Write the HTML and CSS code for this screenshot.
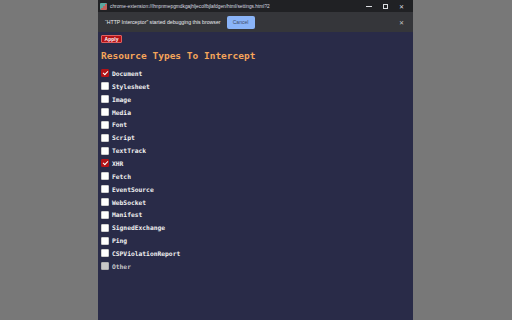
FILE: index.html
```html
<!DOCTYPE html>
<html>
<head>
<meta charset="utf-8">
<link rel="stylesheet" href="styles.css">
</head>
<body>
<div class="window">
  <div class="titlebar">
    <div class="favicon"></div>
    <div class="url">chrome-extension://lhnpnmepgmdkgajhljecolfbjlafdgen/html/settings.html?2</div>
    <div class="controls">
      <span class="min"></span>
      <span class="max"></span>
      <span class="close">✕</span>
    </div>
  </div>
  <div class="infobar">
    <span class="info-text">“HTTP Interceptor” started debugging this browser</span>
    <span class="cancel">Cancel</span>
    <span class="info-close">✕</span>
  </div>
  <div class="content">
    <button class="apply">Apply</button>
    <h1 class="heading">Resource Types To Intercept</h1>
    <ul class="types">
      <li><span class="box checked"></span>Document</li>
      <li><span class="box"></span>Stylesheet</li>
      <li><span class="box"></span>Image</li>
      <li><span class="box"></span>Media</li>
      <li><span class="box"></span>Font</li>
      <li><span class="box"></span>Script</li>
      <li><span class="box"></span>TextTrack</li>
      <li><span class="box checked"></span>XHR</li>
      <li><span class="box"></span>Fetch</li>
      <li><span class="box"></span>EventSource</li>
      <li><span class="box"></span>WebSocket</li>
      <li><span class="box"></span>Manifest</li>
      <li><span class="box"></span>SignedExchange</li>
      <li><span class="box"></span>Ping</li>
      <li><span class="box"></span>CSPViolationReport</li>
      <li class="disabled"><span class="box"></span>Other</li>
    </ul>
  </div>
</div>
</body>
</html>
```
FILE: styles.css
```css
html, body {
  margin: 0;
  padding: 0;
  height: 100%;
  background: #787878;
  overflow: hidden;
}
.window {
  margin-left: 98px;
  width: 315px;
  height: 320px;
  display: flex;
  flex-direction: column;
  font-family: "Liberation Sans", Arial, sans-serif;
}
.titlebar {
  height: 12px;
  background: #202124;
  display: flex;
  align-items: center;
  padding-left: 2px;
  color: #e8eaed;
}
.favicon {
  width: 7px;
  height: 7px;
  background: linear-gradient(135deg, #5ba8a0 0 50%, #c0605a 50% 100%);
  border-radius: 1px;
  margin-right: 3px;
}
.url {
  font-size: 4.8px;
  flex: 1;
  white-space: nowrap;
  color: #dadce0;
}
.controls {
  display: flex;
  align-items: center;
  gap: 11px;
  padding-right: 9px;
}
.min {
  width: 6px;
  height: 1px;
  background: #dadce0;
}
.max {
  width: 5px;
  height: 5px;
  border: 1px solid #dadce0;
  box-sizing: border-box;
}
.close {
  font-size: 6px;
  color: #dadce0;
}
.infobar {
  height: 20px;
  background: #35363a;
  display: flex;
  align-items: center;
  padding-left: 7px;
  padding-right: 9px;
  color: #e8eaed;
  font-size: 5.2px;
}
.info-text {
  margin-right: 6px;
}
.cancel {
  background: #8ab4f8;
  color: #3c4a66;
  border-radius: 2px;
  width: 28px;
  height: 13px;
  display: flex;
  align-items: center;
  justify-content: center;
  font-size: 5px;
}
.info-close {
  margin-left: auto;
  font-size: 6px;
  color: #c4c7c5;
}
.content {
  flex: 1;
  background: #292b48;
  padding: 3px 3px 0 3px;
  font-family: "DejaVu Sans Mono", "Liberation Mono", monospace;
}
.apply {
  display: block;
  background: #b31217;
  color: #fff;
  border: 1px solid #e06060;
  border-radius: 1px;
  font-family: "Liberation Sans", Arial, sans-serif;
  font-size: 5px;
  font-weight: bold;
  width: 21px;
  height: 8px;
  padding: 0;
  line-height: 6px;
  margin: 0;
}
.heading {
  color: #f5a55a;
  font-size: 9.5px;
  font-weight: bold;
  margin: 7px 0 5px 0;
  line-height: 12px;
}
.types {
  list-style: none;
  margin: 0;
  padding: 0;
}
.types li {
  height: 12.87px;
  display: flex;
  align-items: center;
  color: #f2f2f2;
  font-size: 6.3px;
  font-weight: bold;
}
.box {
  width: 8px;
  height: 8px;
  background: #fff;
  border-radius: 1px;
  margin-right: 3px;
  box-sizing: border-box;
  border: 1px solid #d0d0d0;
  position: relative;
}
.box.checked {
  background: #b31217;
  border-color: #b31217;
}
.box.checked::after {
  content: "";
  position: absolute;
  left: 2px;
  top: 0px;
  width: 2px;
  height: 4px;
  border: solid #fff;
  border-width: 0 1.2px 1.2px 0;
  transform: rotate(45deg);
}
.disabled {
  color: #c8c8c8 !important;
}
.disabled .box {
  background: #c8c8c8;
  border-color: #b0b0b0;
}
```
